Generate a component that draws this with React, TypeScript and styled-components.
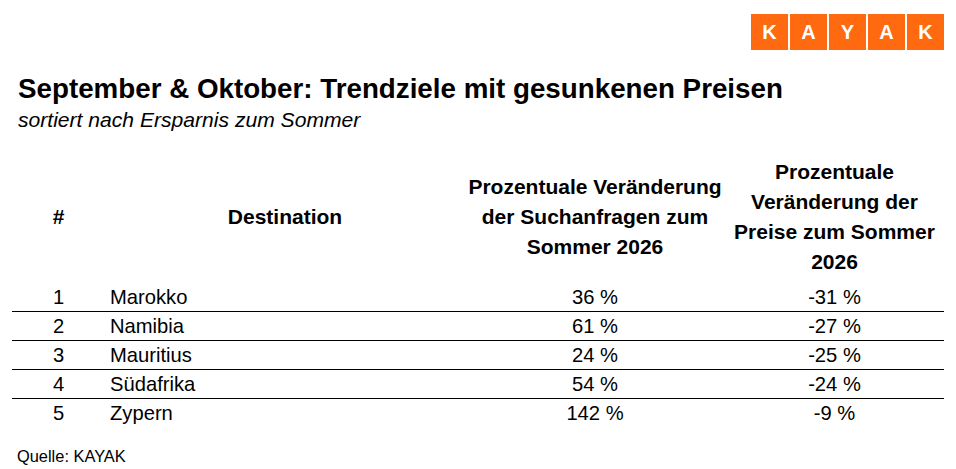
import React from "react";
import styled, { createGlobalStyle } from "styled-components";

const Global = createGlobalStyle`
  html, body { margin: 0; padding: 0; background: #fff; }
  body { font-family: Arial, "Liberation Sans", sans-serif; color: #000; }
`;

const Page = styled.div`
  width: 956px;
  height: 469px;
  box-sizing: border-box;
  padding: 14px 12px 0 12px;
  display: flex;
  flex-direction: column;
  overflow: hidden;
`;

const TopBar = styled.div`
  display: flex;
  justify-content: flex-end;
`;

const Logo = styled.div`
  display: flex;
  gap: 2px;
`;

const LogoTile = styled.div`
  width: 37px;
  height: 36px;
  background: #ff690f;
  color: #fff;
  font-family: Arial, "Liberation Sans", sans-serif;
  font-weight: 700;
  font-size: 20px;
  display: flex;
  align-items: center;
  justify-content: center;
`;

const TitleBlock = styled.div`
  padding-left: 6px;
  margin-top: 23px;
`;

const Title = styled.h1`
  margin: 0;
  font-size: 27.75px;
  line-height: 32px;
  font-weight: 700;
`;

const Subtitle = styled.div`
  margin-top: 3px;
  font-size: 21.1px;
  line-height: 24px;
  font-style: italic;
`;

const Table = styled.div`
  margin-top: 20px;
  display: flex;
  flex-direction: column;
`;

const Row = styled.div<{ $head?: boolean; $line?: boolean }>`
  display: grid;
  grid-template-columns: 93px 360px 260px 219px;
  align-items: center;
  height: ${(p) => (p.$head ? "130px" : "28px")};
  border-bottom: ${(p) => (p.$line ? "1px solid #000" : "1px solid transparent")};
  font-size: ${(p) => (p.$head ? "21px" : "20.2px")};
  font-weight: ${(p) => (p.$head ? 700 : 400)};
  line-height: ${(p) => (p.$head ? "30px" : "24px")};
`;

const Cell = styled.div<{ $align?: "left" | "center" }>`
  text-align: ${(p) => p.$align ?? "center"};
  padding-left: ${(p) => (p.$align === "left" ? "5px" : "0")};
`;

const Source = styled.div`
  margin-top: 18px;
  padding-left: 5px;
  font-size: 16.4px;
  line-height: 20px;
`;

const rows = [
  ["1", "Marokko", "36 %", "-31 %"],
  ["2", "Namibia", "61 %", "-27 %"],
  ["3", "Mauritius", "24 %", "-25 %"],
  ["4", "Südafrika", "54 %", "-24 %"],
  ["5", "Zypern", "142 %", "-9 %"],
];

export default function App() {
  return (
    <>
      <Global />
      <Page>
        <TopBar>
          <Logo>
            {"KAYAK".split("").map((c, i) => (
              <LogoTile key={i}>{c}</LogoTile>
            ))}
          </Logo>
        </TopBar>
        <TitleBlock>
          <Title>September &amp; Oktober: Trendziele mit gesunkenen Preisen</Title>
          <Subtitle>sortiert nach Ersparnis zum Sommer</Subtitle>
        </TitleBlock>
        <Table>
          <Row $head>
            <Cell>#</Cell>
            <Cell>Destination</Cell>
            <Cell>Prozentuale Veränderung der Suchanfragen zum Sommer 2026</Cell>
            <Cell>Prozentuale Veränderung der Preise zum Sommer 2026</Cell>
          </Row>
          {rows.map((r, i) => (
            <Row key={i} $line={i < rows.length - 1}>
              <Cell>{r[0]}</Cell>
              <Cell $align="left">{r[1]}</Cell>
              <Cell>{r[2]}</Cell>
              <Cell>{r[3]}</Cell>
            </Row>
          ))}
        </Table>
        <Source>Quelle: KAYAK</Source>
      </Page>
    </>
  );
}
